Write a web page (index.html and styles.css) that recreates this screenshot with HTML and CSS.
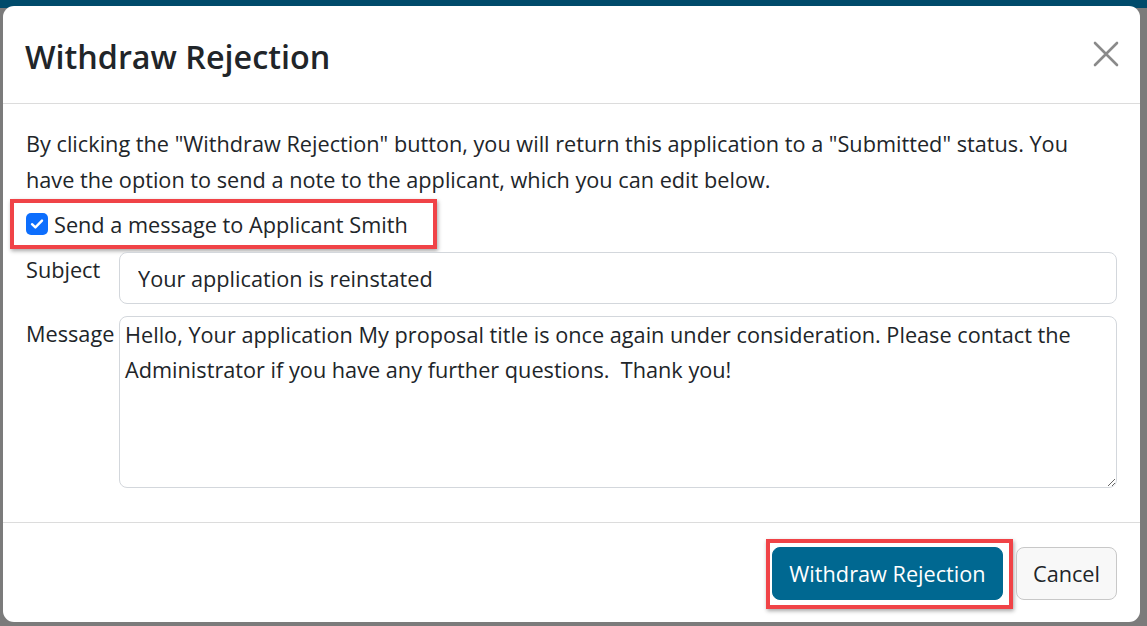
FILE: index.html
```html
<!DOCTYPE html>
<html lang="en">
<head>
<meta charset="utf-8">
<title>Withdraw Rejection</title>
<link rel="stylesheet" href="styles.css">
</head>
<body>
<div class="modal">
  <div class="modal-header">
    <h5 class="modal-title">Withdraw Rejection</h5>
    <button class="btn-close" type="button" aria-label="Close">
      <svg width="26" height="26" viewBox="0 0 26 26"><path d="M2 2 L24 24 M24 2 L2 24" stroke="#8a8a8a" stroke-width="2.6" stroke-linecap="round" fill="none"/></svg>
    </button>
  </div>
  <div class="modal-body">
    <p class="intro">By clicking the "Withdraw Rejection" button, you will return this application to a "Submitted" status. You have the option to send a note to the applicant, which you can edit below.</p>
    <div class="highlight check-row">
      <span class="checkbox"><svg width="14" height="12" viewBox="0 0 14 12"><path d="M2 6.2 L5.4 9.4 L12 2.6" stroke="#fff" stroke-width="2.4" fill="none" stroke-linecap="round" stroke-linejoin="round"/></svg></span>
      <span class="check-label">Send a message to Applicant Smith</span>
    </div>
    <div class="form-row subject-row">
      <label class="form-label">Subject</label>
      <input class="form-control" type="text" value="Your application is reinstated">
    </div>
    <div class="form-row message-row">
      <label class="form-label">Message</label>
      <textarea class="form-control textarea">Hello, Your application My proposal title is once again under consideration. Please contact the Administrator if you have any further questions.  Thank you!</textarea>
    </div>
  </div>
  <div class="modal-footer">
    <span class="highlight btn-wrap"><button class="btn btn-primary" type="button">Withdraw Rejection</button></span>
    <button class="btn btn-light" type="button">Cancel</button>
  </div>
</div>
</body>
</html>
```
FILE: styles.css
```css
html, body {
  margin: 0;
  padding: 0;
}
body {
  width: 1147px;
  height: 626px;
  overflow: hidden;
  background: linear-gradient(#004b6b 0, #004b6b 8px, #7b7b7b 8px);
  font-family: "Open Sans", "Noto Sans", sans-serif;
  color: #212529;
}
.modal {
  margin: 6px 7px 0 3px;
  width: 1137px;
  height: 616px;
  background: #fff;
  border-radius: 11px;
  box-sizing: border-box;
  display: flex;
  flex-direction: column;
}
.modal-header {
  height: 98px;
  box-sizing: border-box;
  display: flex;
  align-items: center;
  justify-content: space-between;
  padding: 0 21px 0 22px;
  border-bottom: 1px solid #dcdcdc;
}
.modal-title {
  margin: 0;
  font-size: 32.3px;
  font-weight: 600;
  letter-spacing: 0;
  padding-top: 2px;
}
.btn-close {
  border: 0;
  background: none;
  padding: 0;
  width: 26px;
  height: 26px;
  margin-bottom: 2px;
  cursor: pointer;
}
.modal-body {
  padding: 22px 23px 0 23px;
  height: 419px;
  box-sizing: border-box;
  border-bottom: 1px solid #dcdcdc;
  font-size: 21.7px;
}
.intro {
  margin: 0;
  line-height: 36px;
}
.highlight {
  border: 4px solid #f04347;
  box-shadow: 1px 2px 4px rgba(0, 0, 0, 0.35);
}
.check-row {
  margin: 1px 0 0 -16px;
  width: 427px;
  height: 50px;
  box-sizing: border-box;
  display: flex;
  align-items: center;
  padding-left: 12px;
}
.checkbox {
  width: 22px;
  height: 22px;
  border-radius: 5px;
  background: #0d6efd;
  display: flex;
  align-items: center;
  justify-content: center;
  margin-right: 6px;
}
.form-row {
  display: flex;
}
.subject-row {
  margin-top: 3px;
}
.message-row {
  margin-top: 12px;
}
.form-label {
  width: 93px;
  flex: none;
  line-height: 36px;
}
.form-control {
  flex: 1;
  box-sizing: border-box;
  border: 1px solid #d3d7dc;
  border-radius: 8px;
  font-family: inherit;
  font-size: 21.7px;
  color: #212529;
  outline: none;
  margin: 0;
}
input.form-control {
  height: 52px;
  padding: 0 18px;
}
.textarea {
  height: 172px;
  padding: 0 5px;
  line-height: 35px;
  resize: both;
}
.modal-footer {
  flex: 1;
  display: flex;
  justify-content: flex-end;
  align-items: flex-start;
  padding: 16px 23px 0 0;
  gap: 3px;
}
.btn-wrap {
  display: block;
  padding: 4px 6px 5px 2px;
}
.btn {
  font-family: inherit;
  font-size: 21.7px;
  height: 53px;
  border-radius: 8px;
  cursor: pointer;
  margin: 0;
  padding: 0;
}
.btn-primary {
  width: 231px;
  background: #006891;
  border: 1px solid #006891;
  color: #fff;
  display: block;
}
.btn-light {
  margin-top: 8px;
  width: 101px;
  background: #f8f8f8;
  border: 1px solid #c8c8c8;
  color: #212529;
}
```
